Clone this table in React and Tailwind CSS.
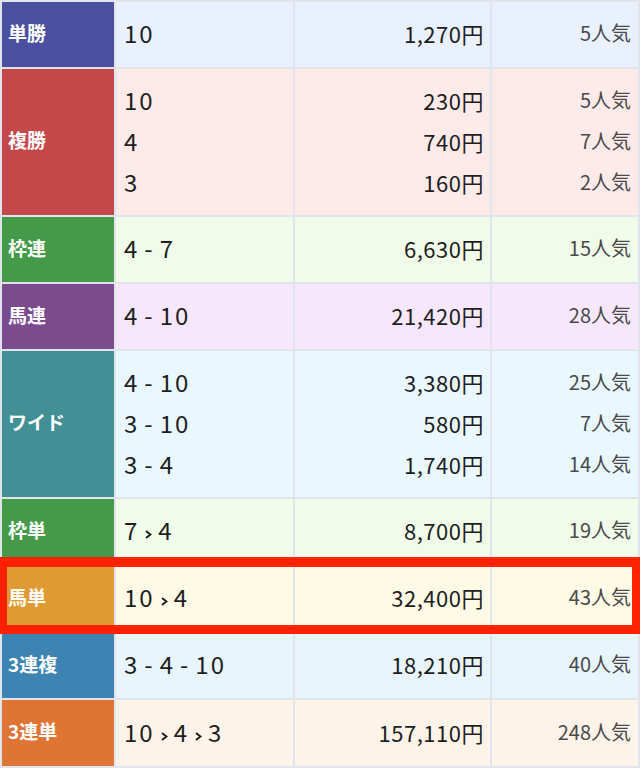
// 払戻金テーブル
const rows = [
    { label: '単勝', color: 'bg-[#4a4f9f]', bg: 'bg-[#e9f0fe]', h: 'h-[65px]', lines: [['10', '1,270', '5']] },
    { label: '複勝', color: 'bg-[#c4484a]', bg: 'bg-[#ffeaea]', h: 'h-[146px]', lines: [['10', '230', '5'], ['4', '740', '7'], ['3', '160', '2']] },
    { label: '枠連', color: 'bg-[#459a4a]', bg: 'bg-[#f0fbe9]', h: 'h-[65px]', lines: [['4-7', '6,630', '15']] },
    { label: '馬連', color: 'bg-[#7b4c8d]', bg: 'bg-[#f6e7fc]', h: 'h-[65px]', lines: [['4-10', '21,420', '28']] },
    { label: 'ワイド', color: 'bg-[#438f96]', bg: 'bg-[#e9f8fe]', h: 'h-[146px]', lines: [['4-10', '3,380', '25'], ['3-10', '580', '7'], ['3-4', '1,740', '14']] },
    { label: '枠単', color: 'bg-[#459a4a]', bg: 'bg-[#f0fbe9]', h: 'h-[65px]', lines: [['7>4', '8,700', '19']] },
    { label: '馬単', color: 'bg-[#e09a33]', bg: 'bg-[#fefae6]', h: 'h-[65px]', lines: [['10>4', '32,400', '43']] },
    { label: '3連複', color: 'bg-[#3e84b3]', bg: 'bg-[#e8f5fd]', h: 'h-[65px]', lines: [['3-4-10', '18,210', '40']] },
    { label: '3連単', color: 'bg-[#e07434]', bg: 'bg-[#fdf3e9]', h: 'h-[66px]', lines: [['10>4>3', '157,110', '248']] },
];

const Chevron = () => (
    <svg className="inline-block mx-[6px] align-[1px]" width="7" height="9" viewBox="0 0 7 9" fill="none">
        <path d="M1 1 L5.5 4.5 L1 8" stroke="#1e1e1e" strokeWidth="2" strokeLinejoin="miter" />
    </svg>
);

const Combo = ({ value }) => (
    <span>
        {value.split(/([->])/).map((part, i) => {
            if (part === '-') return <span key={i} className="mx-[5px]">-</span>;
            if (part === '>') return <Chevron key={i} />;
            return <span key={i}>{part}</span>;
        })}
    </span>
);

export default function App() {
    return (
        <div className="relative w-[640px] h-[768px] bg-[#e2e4eb] p-[2px] font-['Noto_Sans_CJK_JP',sans-serif] overflow-hidden">
            <div className="flex flex-col gap-[2px]">
                {rows.map((row) => (
                    <div key={row.label} className={`grid grid-cols-[112px_177px_195px_146px] gap-[2px] ${row.h}`}>
                        <div className={`${row.color} flex items-center pl-[6px] pb-[3px] text-white font-bold text-[19px]`}>
                            {row.label}
                        </div>
                        <div className={`${row.bg} flex flex-col justify-center pl-[8px] text-[24px] text-[#1e1e1e] tracking-[2px]`}>
                            {row.lines.map((l, i) => (
                                <div key={i} className="h-[41px] leading-[37px]"><Combo value={l[0]} /></div>
                            ))}
                        </div>
                        <div className={`${row.bg} flex flex-col justify-center items-end pr-[6px] text-[22px] tracking-[0.5px] text-[#1e1e1e]`}>
                            {row.lines.map((l, i) => (
                                <div key={i} className="h-[41px] leading-[38px]">{l[1]}円</div>
                            ))}
                        </div>
                        <div className={`${row.bg} flex flex-col justify-center items-end pr-[7px] text-[20px] text-[#4a4a4a]`}>
                            {row.lines.map((l, i) => (
                                <div key={i} className="h-[41px] leading-[38px]">{l[2]}人気</div>
                            ))}
                        </div>
                    </div>
                ))}
            </div>
            {/* highlight */}
            <div className="absolute left-0 top-[557px] w-[640px] h-[77px] border-[#fe2200] border-t-[10px] border-l-[7px] border-r-[8px] border-b-[9px]" />
        </div>
    );
}
